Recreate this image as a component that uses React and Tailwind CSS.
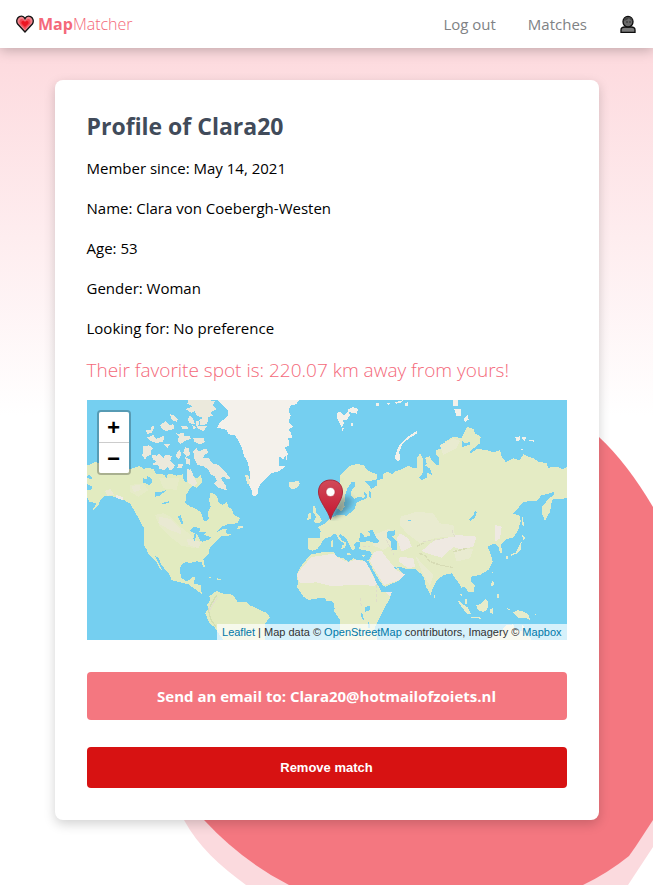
import React from "react";

const details = [
  ["Member since", "May 14, 2021"],
  ["Name", "Clara von Coebergh-Westen"],
  ["Age", "53"],
  ["Gender", "Woman"],
  ["Looking for", "No preference"],
];

function HeartIcon() {
  return (
    <svg viewBox="0 0 54 54" className="h-[18px] w-[18px]" aria-hidden="true">
      <path d="M27 51 L5 27 C0 20 2 9 10 5 C17 2 24 5 27 11 C30 5 37 2 44 5 C52 9 54 20 49 27 Z" fill="#f0858e" stroke="#151515" strokeWidth="4" />
      <path d="M27 43 L12 27 C8 19 11 12 17 12 C22 12 25 15 27 19 C29 15 32 12 37 12 C43 12 46 19 42 27 Z" fill="#f14a56" />
      <path d="M27 36 L17 26 C14 20 19 16 24 19 L27 21 L30 19 C35 16 40 20 37 26 Z" fill="#ec1522" />
    </svg>
  );
}

function PersonIcon() {
  return (
    <svg viewBox="0 0 54 60" className="h-5 w-[18px]" aria-hidden="true">
      <path d="M6 55 V48 C6 42 11 39 18 39 H36 C43 39 48 42 48 48 V55 Z" fill="#7a7a7a" stroke="#0d0d0d" strokeWidth="4" />
      <ellipse cx="27" cy="23" rx="15" ry="16" fill="#6a6a6a" stroke="#0d0d0d" strokeWidth="4" />
      <path d="M14 20 C22 20 28 15 30 11 C32 16 36 19 41 20 C39 6 16 5 14 20Z" fill="#444" />
      <path d="M24 22 v4 M33 22 v4" stroke="#111" strokeWidth="3" />
    </svg>
  );
}

function WorldMap() {
  return (
    <svg viewBox="0 0 1440 720" preserveAspectRatio="xMidYMid slice" className="block h-full w-full bg-[#75cff0]" shapeRendering="crispEdges" role="img" aria-label="World map">
      {/* Americas */}
      <g transform="translate(-21 -15)">
        <path fill="#e2ebc0" d="M21 212 L36 206 L48 200 L58 206 L75 215 L100 220 L130 228 L152 222 L165 218 L178 212 L190 222 L205 218 L222 224 L228 236 L245 236 L258 242 L270 236 L290 242 L308 238 L312 258 L322 262 L322 240 L332 222 L342 245 L350 250 L362 240 L368 262 L350 278 L338 272 L328 284 L318 300 L316 325 L328 333 L345 341 L358 348 L366 358 L370 375 L378 380 L386 372 L384 350 L392 335 L387 315 L392 292 L402 297 L412 305 L415 322 L428 330 L440 322 L446 336 L456 344 L460 358 L480 370 L472 385 L445 387 L425 395 L412 410 L430 401 L440 403 L436 414 L455 419 L440 424 L425 424 L412 435 L398 448 L388 462 L388 475 L378 485 L370 493 L372 505 L376 518 L368 514 L366 501 L350 499 L335 503 L315 502 L302 512 L300 530 L305 550 L318 558 L330 555 L338 545 L346 546 L340 565 L362 570 L362 585 L367 598 L345 582 L325 568 L300 562 L275 555 L268 538 L255 523 L242 505 L236 490 L225 482 L238 508 L248 530 L238 518 L230 500 L216 487 L206 478 L198 460 L192 450 L192 400 L178 375 L165 350 L150 325 L125 312 L95 303 L75 303 L62 315 L55 330 L37 347 L50 323 L30 322 L21 308 L21 286 L36 283 L36 275 L22 268 L22 248 L34 254 L38 248 L28 240 L21 242Z" />
        <path fill="#e6ebc8" d="M225 360 L250 355 L270 365 L295 390 L320 410 L350 440 L345 460 L305 452 L270 425 L240 395Z M150 270 L190 265 L205 285 L175 305 L150 290Z M238 250 L298 250 L290 285 L250 280Z" />
        <path fill="#e9e9d2" d="M238 365 L270 372 L300 400 L305 418 L270 405 L235 385Z M155 275 L178 268 L182 285 L162 292Z M75 288 L92 282 L102 300 L82 302Z M320 430 L365 442 L355 460 L325 450Z" />
        <path fill="#efebe5" d="M108 300 L130 306 L128 316 L108 308Z" />
        <path fill="#ebe9dc" d="M190 152 L200 154 L205 150 L220 160 L212 168 L212 180 L200 184 L196 194 L186 180 L190 170Z M215 178 L230 182 L238 176 L252 190 L250 182 L265 180 L276 184 L270 198 L285 210 L278 222 L270 226 L262 216 L252 225 L238 222 L236 212 L216 208 L228 200 L218 192Z M290 174 L300 165 L304 178 L296 192 L288 186Z M315 157 L326 160 L330 178 L320 186 L310 172Z M316 186 L330 194 L330 210 L318 206Z M342 188 L340 170 L350 160 L356 170 L378 160 L386 174 L374 178 L368 190 L386 190 L398 205 L416 210 L428 224 L440 236 L452 252 L438 252 L432 244 L422 250 L438 272 L440 286 L426 282 L412 276 L402 264 L412 258 L404 244 L394 240 L386 226 L372 214 L352 210Z M320 220 L334 226 L344 250 L352 265 L342 275 L326 264 L320 248Z M296 206 L310 208 L304 220 L292 218Z M282 62 L294 72 L290 80 L275 75 L270 58Z M240 90 L258 78 L270 92 L280 86 L282 102 L260 108 L246 102Z M202 118 L198 106 L212 104 L216 92 L224 96 L216 112Z M200 128 L220 120 L228 132 L252 122 L250 140 L228 144 L210 138Z M282 112 L295 118 L310 112 L312 124 L328 122 L334 132 L318 136 L302 146 L292 138 L298 124Z M340 128 L372 130 L374 142 L358 148 L342 140Z M302 92 L320 92 L326 102 L308 102Z M337 90 L348 96 L342 106Z M250 148 L270 146 L262 160Z M325 15 L380 15 L405 18 L398 32 L410 42 L392 52 L398 62 L384 66 L382 86 L362 92 L358 76 L368 68 L350 62 L344 48 L334 54 L316 42 L338 35 L322 26Z M348 78 L358 78 L355 92 L382 94 L370 108 L350 98Z M330 62 L340 72 L345 88 L328 84 L322 72Z" />
        <path fill="#75cff0" d="M188 250 L202 252 L202 244 L217 252 L216 262 L208 270 L188 262Z M225 290 L240 292 L258 286 L240 302 L226 305Z M243 325 L268 318 L268 322 L252 328Z M294 365 L302 360 L310 385 L304 388Z M252 232 L262 240 L262 252 L256 246Z M328 408 L342 395 L360 400 L358 412 L378 412 L372 420 L394 427 L390 432 L368 440 L360 436 L350 414 L344 440 L340 432 L344 414Z M378 356 L384 356 L384 372 L376 368Z" />
        <path fill="#e2ebc0" d="M475 394 L487 392 L488 400 L472 401Z M386 545 H393 V549 H386Z M410 550 L423 552 L422 556 L412 554Z M388 603 L410 588 L430 596 L448 596 L462 604 L472 620 L500 622 L512 632 L530 640 L562 655 L570 668 L555 685 L555 735 L430 735 L402 695 L390 686 L375 655 L384 643 L382 628 L391 616Z" />
        <path fill="none" stroke="#d3dfb1" strokeWidth="4" d="M410 600 L395 625 L385 645 L393 675 L408 695" />
        <path fill="none" stroke="#e2ddcf" strokeWidth="3" d="M390 632 L388 650 L400 625 L414 606" />
      </g>
      {/* Europe, Africa and Asia */}
      <g transform="translate(459 -15)">
        <path fill="#f4f1eb" d="M-68 15 L-50 34 L-35 48 L-35 62 L-60 82 L-68 98 L-40 105 L-35 118 L-15 120 L0 145 L8 165 L12 182 L22 200 L28 220 L30 245 L25 265 L35 285 L35 300 L45 305 L55 296 L55 280 L62 265 L78 250 L95 235 L118 228 L140 212 L118 212 L118 185 L130 192 L138 180 L140 200 L143 175 L135 158 L148 150 L145 130 L158 130 L152 112 L145 105 L158 95 L146 80 L152 60 L146 50 L150 32 L168 28 L178 15Z" />
        <path fill="#e9ebd0" d="M15 240 L25 242 L30 266 L22 268Z M148 262 L162 260 L175 256 L180 266 L170 280 L155 282 L146 272Z M0 394 H10 V400 H0Z" />
        <path fill="#f3f1ea" d="M290 56 L298 50 L312 60 L325 48 L330 62 L318 76 L308 74 L312 86 L304 96 L292 72Z M322 44 L340 36 L354 42 L350 56 L330 52Z M332 82 L340 86 L338 94 L332 92Z M306 98 L312 100 L308 109Z M408 25 L418 25 V32 H408Z M440 26 L450 24 L448 30Z M465 22 L488 16 L486 22 L468 26Z M495 26 L503 22 L503 32 H495Z M464 190 L470 168 L480 148 L505 124 L530 108 L530 116 L510 128 L488 145 L478 170 L480 196 L472 198Z M638 15 L653 15 L653 34 L638 32Z M642 42 L662 42 L664 62 L650 65Z M672 70 L684 60 L686 74 L674 82Z M826 126 L840 124 L838 138 L828 137Z M844 128 L858 126 L854 140Z M866 134 L882 136 V140 L868 138Z M842 160 L850 162 L846 166Z" />
        <path fill="#e4ebc4" d="M270 372 L262 378 L256 386 L240 393 L235 398 L242 408 L240 428 L205 430 L203 462 L218 467 L232 462 L242 448 L252 432 L272 425 L280 417 L288 418 L296 432 L314 448 L306 450 L304 462 L314 458 L320 444 L308 438 L296 424 L300 416 L318 430 L325 442 L330 454 L338 466 L346 460 L342 448 L352 440 L360 442 L358 462 L374 466 L390 468 L395 478 L388 494 L378 498 L350 494 L340 490 L326 500 L310 490 L288 484 L282 470 L245 472 L215 478 L202 490 L182 515 L170 540 L174 565 L170 575 L190 605 L205 615 L235 610 L255 608 L260 618 L280 620 L284 640 L282 648 L300 675 L300 735 L410 735 L412 718 L402 705 L410 685 L430 645 L450 610 L455 590 L425 592 L418 570 L405 545 L390 515 L385 500 L395 515 L405 538 L420 560 L430 578 L480 555 L494 538 L480 528 L474 516 L468 526 L455 518 L444 500 L455 512 L470 518 L480 515 L500 522 L525 522 L545 538 L552 550 L558 575 L572 600 L578 580 L588 560 L598 550 L610 540 L635 535 L646 550 L655 562 L664 578 L675 576 L685 590 L702 590 L704 572 L692 560 L695 545 L720 540 L745 525 L758 500 L750 470 L742 455 L765 445 L775 455 L780 475 L788 472 L782 450 L800 432 L820 428 L835 405 L842 378 L838 362 L818 355 L830 345 L850 320 L890 318 L905 300 L920 298 L943 290 L943 298 L925 312 L907 335 L907 360 L915 377 L930 350 L935 320 L940 312 L981 310 V215 L970 223 L950 215 L925 218 L920 205 L895 200 L880 190 L865 185 L850 178 L838 196 L820 190 L798 202 L785 185 L780 165 L760 172 L740 165 L710 162 L692 175 L690 168 L720 145 L722 125 L705 115 L700 102 L682 95 L675 108 L665 130 L640 125 L615 140 L612 160 L588 165 L588 178 L598 190 L598 212 L588 210 L574 195 L570 184 L555 188 L560 205 L555 212 L570 220 L577 240 L560 232 L560 248 L545 255 L536 248 L548 235 L548 190 L540 175 L530 190 L530 220 L520 220 L504 212 L482 225 L465 228 L458 238 L440 230 L428 240 L430 252 L410 255 L412 270 L395 282 L375 258 L395 257 L412 252 L410 238 L385 228 L370 210 L352 207 L330 212 L312 228 L300 240 L300 310 L290 340 L290 360Z" />
        <path fill="#e3ebc0" d="M300 250 H312 V355 H296Z" />
        <path fill="#efe9e2" d="M215 486 L282 476 L295 488 L325 502 L345 494 L378 500 L410 565 L405 572 L330 570 L275 574 L230 562 L180 565 L170 540 L188 515Z M390 500 L402 470 L425 468 L445 495 L470 526 L494 538 L480 555 L432 570Z M480 485 L520 490 L525 515 L505 520 L475 498Z M545 468 L580 438 L622 428 L650 420 L710 425 L700 455 L665 464 L640 456 L605 488 L570 478Z M765 390 L785 395 L780 430 L765 440Z M480 415 L505 430 L515 455 L485 470 L470 430Z M435 590 L456 590 L450 604Z" />
        <path fill="#e9ebd0" d="M482 365 L530 350 L580 355 L600 385 L640 390 L645 425 L590 428 L540 445 L500 415 L480 390Z M600 150 L640 130 L660 138 L650 160 L610 180Z M640 465 L700 462 L690 490 L650 500Z M400 420 L450 400 L455 450 L430 465 L400 452Z M525 480 L545 505 L580 540 L570 572 L550 540Z" />
        <path fill="none" stroke="#d7dcb5" strokeWidth="4" strokeDasharray="12 3" d="M538 475 L555 482 L570 500 L600 510 L640 518 M640 470 L680 460 M530 455 L550 444" />
        <path fill="none" stroke="#dfdccb" strokeWidth="3" strokeDasharray="8 6" d="M550 440 L590 434 L616 430 M636 405 L645 428 M370 455 L390 456 M440 435 L462 480 M360 610 L365 640 M410 570 V620" />
        <path fill="#75cff0" d="M336 260 L346 260 L345 275 L335 284 L333 300 L342 312 L360 304 L368 310 L376 306 L372 298 L370 290 L380 296 L380 310 L365 316 L350 322 L344 340 L335 350 L320 362 L298 360 L285 358 L284 345 L295 340 L302 350 L314 336 L312 326 L315 300 L322 280Z M386 288 L394 292 L392 310 L386 304Z M360 412 L368 416 L374 428 L392 420 L384 408 L398 404 L408 428 L418 436 L412 446 L385 438 L368 442 L356 438 L360 424Z M440 410 L466 406 L465 420 L455 424 L472 440 L472 465 L455 464 L452 440 L440 426Z M375 498 L386 498 L402 530 L418 556 L430 572 L456 588 L456 592 L425 592 L408 560 L392 526Z M375 636 L390 632 L388 648 L376 650Z M362 650 L369 658 L372 678 L365 668Z M385 680 L389 688 L389 700 L385 698Z M666 138 L674 146 L690 140 L690 148 L674 154 L668 160Z M686 375 L700 362 L704 348 L711 350 L706 366 L692 378Z M505 375 H514 V378 H505Z" />
        <path fill="#e4ebc5" d="M220 332 L226 336 L228 352 L238 362 L245 376 L238 384 L222 382 L224 372 L230 366 L220 354Z M204 356 L214 354 L214 370 L202 375Z M272 438 L278 436 L278 456 L272 456Z M320 474 L332 476 V480 H322Z M366 480 L376 480 L370 485Z M300 284 L316 298 L312 335 L302 350 L294 340 L298 325Z" />
        <path fill="#e7eccb" d="M845 365 L850 370 L851 392 L846 390Z M846 420 L857 428 L850 435Z M845 440 L843 465 L832 475 L815 482 L808 480 L828 472 L838 450Z M797 482 H804 V492 H797Z M756 530 H760 V535 H756Z M755 558 L762 560 L760 574 L754 572Z M770 598 H776 V608 H770Z M581 598 L586 600 L586 610 L581 608Z M652 614 L664 624 L684 638 L692 656 L682 656 L664 636Z M660 596 L666 597 L664 604Z M674 610 L682 614 L680 628 L674 624Z M708 630 L722 628 L738 612 L744 620 L742 644 L730 651 L714 645Z M690 665 L725 668 L722 671 L695 668Z M750 643 L758 640 L758 658 L750 652Z M802 640 L812 642 L806 646Z M820 652 L832 646 L848 648 L864 658 L872 676 L858 668 L834 668Z M884 656 H888 V660 H884Z M738 735 L760 716 L782 710 L800 690 L820 688 L824 704 L845 708 L848 688 L856 708 L875 735Z" />
      </g>
    </svg>
  );
}

function MapPin() {
  return (
    <svg viewBox="0 0 44 42" className="absolute left-[230px] top-[79px] h-[42px] w-11" aria-hidden="true">
      <defs>
        <linearGradient id="pinFill" x1="0" y1="0" x2="0" y2="1">
          <stop offset="0" stopColor="#d14a59" />
          <stop offset="1" stopColor="#c51530" />
        </linearGradient>
        <linearGradient id="pinShade" x1="0" y1="0" x2="1" y2="0">
          <stop offset="0" stopColor="#234653" stopOpacity="0.7" />
          <stop offset="1" stopColor="#234653" stopOpacity="0.15" />
        </linearGradient>
        <filter id="pinBlur" x="-30%" y="-30%" width="160%" height="160%">
          <feGaussianBlur stdDeviation="2" />
        </filter>
      </defs>
      <path d="M14 40 L22 21 C29 14 40 18 36 25 C33 31 24 36 14 40Z" fill="url(#pinShade)" filter="url(#pinBlur)" />
      <path d="M13.500 40.500 C11 31 1.500 22 1.500 13 C1.500 5 7 1 13.500 1 C20 1 25.500 5 25.500 13 C25.500 22 16 31 13.500 40.500Z" fill="url(#pinFill)" stroke="#a82a3c" strokeWidth="1" />
      <circle cx="13.500" cy="13" r="4.500" fill="#fff" stroke="#ae2637" strokeWidth="0.500" />
    </svg>
  );
}

export default function App() {
  return (
    <div className="relative isolate min-h-screen overflow-hidden bg-white bg-[linear-gradient(180deg,#fddbdf_60px,#ffffff_415px)] font-['Open_Sans','Noto_Sans',sans-serif] text-[15px] text-black">
      <svg viewBox="0 0 653 885" className="absolute right-0 top-0 -z-10 h-[885px] w-[653px]" aria-hidden="true">
        <path d="M184 820 C198 846 220 866 246 885 H628 L653 847 V600 H184Z" fill="#fbdade" />
        <path d="M599 437 Q627 463 653 507 V820 L636 846 L629 856 Q608 873 583 885 H289 Q242 861 204 820 V437Z" fill="#f47780" />
      </svg>

      <header className="flex h-12 items-center justify-between bg-white px-4 shadow-[0_2px_12px_rgba(0,0,0,0.25)]">
        <a href="#home" className="flex items-center gap-1 text-base text-[#f4697a]">
          <HeartIcon />
          <span><b>Map</b><span className="font-light">Matcher</span></span>
        </a>
        <nav className="flex items-center gap-8 text-[15px] text-[#808285]">
          <a href="#logout">Log out</a>
          <a href="#matches">Matches</a>
          <a href="#profile" aria-label="Profile"><PersonIcon /></a>
        </nav>
      </header>

      <main className="mx-auto mt-8 w-[calc(100%-32px)] max-w-[544px] rounded-lg bg-white p-8 shadow-[0_4px_12px_rgba(0,0,0,0.18)]">
        <h1 className="text-[23px] font-bold leading-7 text-[#414b5a]">Profile of Clara20</h1>
        <div className="mt-4 flex flex-col gap-4 leading-6">
          {details.map(([label, value]) => (
            <p key={label}>{label}: {value}</p>
          ))}
        </div>
        <p className="mt-4 text-[19px] font-light leading-7 text-[#f4697a]">Their favorite spot is: 220.07 km away from yours!</p>

        <section className="relative mt-4 h-60 overflow-hidden" aria-label="Favorite spot">
          <WorldMap />
          <MapPin />
          <div className="absolute left-2.5 top-2.5 flex w-[34px] flex-col rounded border-2 border-black/25 bg-clip-padding font-['Liberation_Mono',monospace] text-[22px] font-bold leading-6">
            <button type="button" aria-label="Zoom in" className="h-[31px] rounded-t-xs border-b border-[#ccc] bg-white pt-1.5">+</button>
            <button type="button" aria-label="Zoom out" className="h-[30px] rounded-b-xs bg-white pt-1.5">−</button>
          </div>
          <p className="absolute bottom-0 right-0 whitespace-nowrap bg-white/70 px-[5px] font-['Liberation_Sans',Arial,sans-serif] text-[11px] leading-4 text-[#333]">
            <a href="#leaflet" className="text-[#0078a8]">Leaflet</a> | Map data © <a href="#osm" className="text-[#0078a8]">OpenStreetMap</a> contributors, Imagery © <a href="#mapbox" className="text-[#0078a8]">Mapbox</a>
          </p>
        </section>

        <a href="mailto:Clara20@hotmailofzoiets.nl" className="mt-8 flex h-12 items-center justify-center rounded bg-[#f47780] font-bold text-white">
          Send an email to: Clara20@hotmailofzoiets.nl
        </a>
        <button type="button" className="mt-[27px] block h-[41px] w-full rounded bg-[#d71212] font-['Liberation_Sans',Arial,sans-serif] text-[13px] font-bold text-white">
          Remove match
        </button>
      </main>
    </div>
  );
}
